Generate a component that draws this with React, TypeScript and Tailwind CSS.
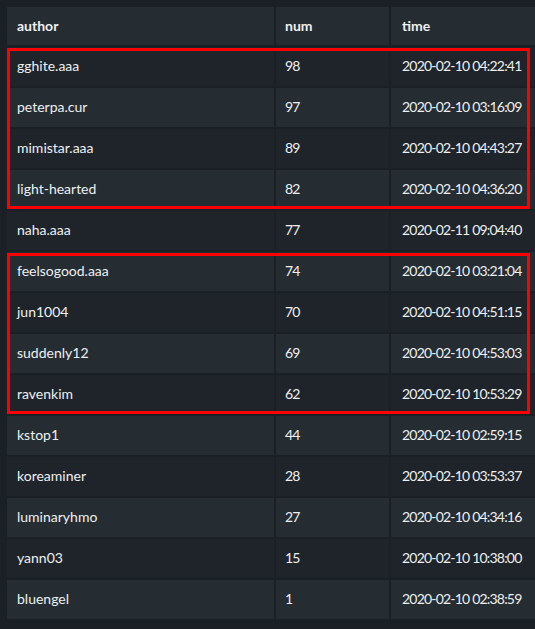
import React from "react";

const rows: [string, string, string][] = [
  ["gghite.aaa", "98", "2020-02-10 04:22:41"],
  ["peterpa.cur", "97", "2020-02-10 03:16:09"],
  ["mimistar.aaa", "89", "2020-02-10 04:43:27"],
  ["light-hearted", "82", "2020-02-10 04:36:20"],
  ["naha.aaa", "77", "2020-02-11 09:04:40"],
  ["feelsogood.aaa", "74", "2020-02-10 03:21:04"],
  ["jun1004", "70", "2020-02-10 04:51:15"],
  ["suddenly12", "69", "2020-02-10 04:53:03"],
  ["ravenkim", "62", "2020-02-10 10:53:29"],
  ["kstop1", "44", "2020-02-10 02:59:15"],
  ["koreaminer", "28", "2020-02-10 03:53:37"],
  ["luminaryhmo", "27", "2020-02-10 04:34:16"],
  ["yann03", "15", "2020-02-10 10:38:00"],
  ["bluengel", "1", "2020-02-10 02:38:59"],
];

function Row({ r, i }: { r: [string, string, string]; i: number }) {
  const bg = i % 2 === 0 ? "bg-[#1e242a]" : "bg-[#252c32]";
  return (
    <div className="flex gap-[2px] h-[39px] shrink-0">
      <div className={`w-[267px] shrink-0 flex items-center pl-[10px] pb-[2px] ${bg}`}>{r[0]}</div>
      <div className={`w-[113px] shrink-0 flex items-center pl-[9px] pb-[2px] tracking-[-0.8px] ${bg}`}>{r[1]}</div>
      <div className={`w-[160px] shrink-0 flex items-center pl-[11px] pb-[2px] tracking-[-0.8px] ${bg}`}>{r[2]}</div>
    </div>
  );
}

function Group({ start, end }: { start: number; end: number }) {
  return (
    <div className="relative flex flex-col gap-[2px]">
      {rows.slice(start, end).map((r, k) => (
        <Row key={start + k} r={r} i={start + k} />
      ))}
      <div className="absolute left-0 top-[1px] bottom-0 w-[523px] border-[3px] border-[#ff0000] pointer-events-none" />
    </div>
  );
}

export default function App() {
  return (
    <div
      className="w-[535px] h-[629px] overflow-hidden bg-[#1b2026] pl-[7px] pt-[7px] flex flex-col gap-[2px] text-[14px] text-[#eef0f2]"
      style={{ fontFamily: "Lato, 'Open Sans', sans-serif" }}
    >
      <div className="flex gap-[2px] h-[38px] shrink-0 font-bold">
        <div className="w-[267px] shrink-0 flex items-center pl-[10px] pb-[2px] bg-[#252c32]">author</div>
        <div className="w-[113px] shrink-0 flex items-center pl-[9px] pb-[2px] bg-[#252c32]">num</div>
        <div className="w-[160px] shrink-0 flex items-center pl-[11px] pb-[2px] bg-[#252c32]">time</div>
      </div>
      <Group start={0} end={4} />
      <Row r={rows[4]} i={4} />
      <Group start={5} end={9} />
      {rows.slice(9).map((r, k) => (
        <Row key={9 + k} r={r} i={9 + k} />
      ))}
    </div>
  );
}
